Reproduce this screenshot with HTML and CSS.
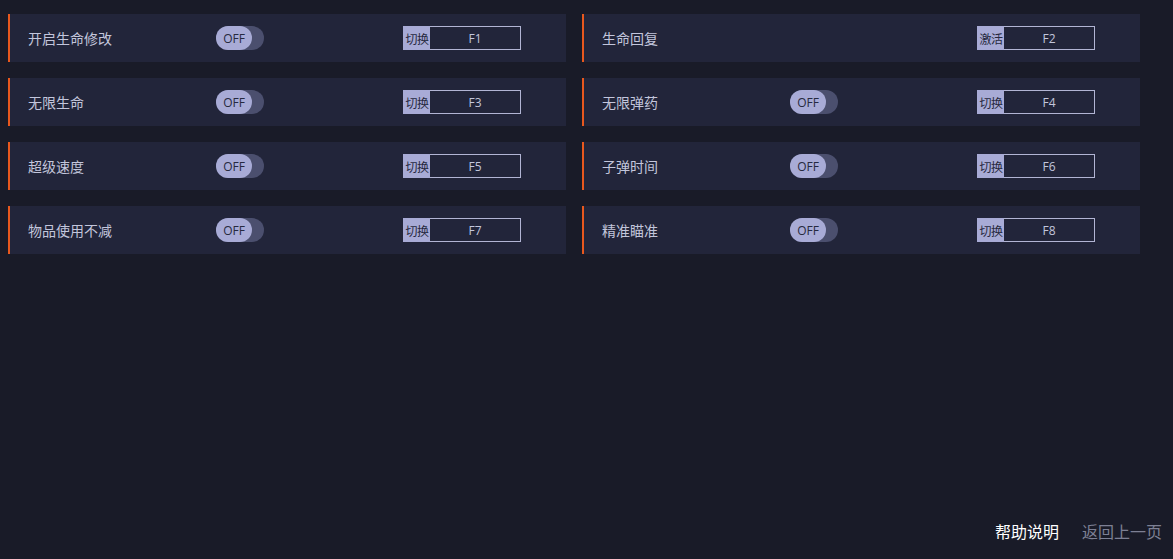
FILE: index.html
```html
<!DOCTYPE html>
<html lang="zh">
<head>
<meta charset="utf-8">
<link rel="stylesheet" href="styles.css">
</head>
<body>
<div class="page">
  <div class="grid">
    <div class="card"><span class="label">开启生命修改</span><span class="toggle"><span class="knob">OFF</span></span><span class="key"><span class="act">切换</span><span class="hk">F1</span></span></div>
    <div class="card"><span class="label">生命回复</span><span class="toggle hidden"></span><span class="key"><span class="act">激活</span><span class="hk">F2</span></span></div>
    <div class="card"><span class="label">无限生命</span><span class="toggle"><span class="knob">OFF</span></span><span class="key"><span class="act">切换</span><span class="hk">F3</span></span></div>
    <div class="card"><span class="label">无限弹药</span><span class="toggle"><span class="knob">OFF</span></span><span class="key"><span class="act">切换</span><span class="hk">F4</span></span></div>
    <div class="card"><span class="label">超级速度</span><span class="toggle"><span class="knob">OFF</span></span><span class="key"><span class="act">切换</span><span class="hk">F5</span></span></div>
    <div class="card"><span class="label">子弹时间</span><span class="toggle"><span class="knob">OFF</span></span><span class="key"><span class="act">切换</span><span class="hk">F6</span></span></div>
    <div class="card"><span class="label">物品使用不减</span><span class="toggle"><span class="knob">OFF</span></span><span class="key"><span class="act">切换</span><span class="hk">F7</span></span></div>
    <div class="card"><span class="label">精准瞄准</span><span class="toggle"><span class="knob">OFF</span></span><span class="key"><span class="act">切换</span><span class="hk">F8</span></span></div>
  </div>
  <div class="footer">
    <span class="help">帮助说明</span>
    <span class="back">返回上一页</span>
  </div>
</div>
</body>
</html>
```
FILE: styles.css
```css
html, body {
  margin: 0;
  padding: 0;
  background: #191b28;
  font-family: "Noto Sans CJK SC", "Microsoft YaHei", sans-serif;
}
.page {
  width: 1173px;
  height: 559px;
  box-sizing: border-box;
  padding: 14px 0 0 8px;
  display: flex;
  flex-direction: column;
}
.grid {
  display: grid;
  grid-template-columns: 558px 558px;
  grid-auto-rows: 48px;
  column-gap: 16px;
  row-gap: 16px;
}
.card {
  display: flex;
  align-items: center;
  background: #22253a;
  border-left: 2px solid #e8581e;
  box-sizing: border-box;
  padding-left: 18px;
}
.label {
  width: 188px;
  font-size: 14px;
  color: #c3c6dc;
  letter-spacing: 0;
}
.toggle {
  width: 48px;
  height: 24px;
  border-radius: 12px;
  background: #4b4f6e;
  display: flex;
  margin-right: 139px;
}
.toggle.hidden { visibility: hidden; }
.knob {
  width: 36px;
  height: 24px;
  border-radius: 12px;
  background: #a8abd6;
  color: #262940;
  font-family: "Open Sans", "Liberation Sans", sans-serif;
  font-size: 12px;
  display: flex;
  align-items: center;
  justify-content: center;
}
.key {
  width: 118px;
  height: 24px;
  box-sizing: border-box;
  border: 1px solid #b2b5d4;
  display: flex;
  align-items: stretch;
}
.act {
  width: 26px;
  margin: -1px 0 -1px -1px;
  padding-left: 1px;
  background: #a8abd6;
  color: #262940;
  font-size: 12px;
  display: flex;
  align-items: center;
  justify-content: center;
  letter-spacing: -0.5px;
}
.hk {
  flex: 1;
  display: flex;
  align-items: center;
  justify-content: center;
  color: #c3c6dc;
  font-family: "Open Sans", "Liberation Sans", sans-serif;
  font-size: 12px;
}
.footer {
  margin-top: auto;
  display: flex;
  justify-content: flex-end;
  gap: 23px;
  padding: 0 11px 17px 0;
  font-size: 16px;
  line-height: 22px;
}
.help { color: #ffffff; }
.back { color: #7d8094; }
```
